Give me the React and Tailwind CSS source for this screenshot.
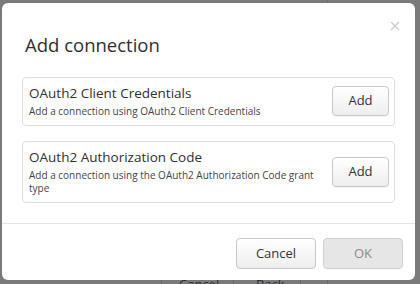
import React from 'react';

const FONT = { fontFamily: '"Open Sans", "Noto Sans", sans-serif' };

const OPTIONS = [
  {
    id: 'client-credentials',
    title: 'OAuth2 Client Credentials',
    desc: 'Add a connection using OAuth2 Client Credentials',
  },
  {
    id: 'auth-code',
    title: 'OAuth2 Authorization Code',
    desc: 'Add a connection using the OAuth2 Authorization Code grant type',
  },
];

function CloseIcon() {
  return (
    <svg width="10" height="10" viewBox="0 0 10 10" className="block">
      <path d="M1 1 L9 9 M9 1 L1 9" stroke="#c9c9c9" strokeWidth="1.2" fill="none" />
    </svg>
  );
}

// page behind the overlay; only its bottom edge peeks out under the dialog
function Backdrop() {
  return (
    <div className="absolute inset-0 bg-[#7a7a7a] flex flex-col justify-between">
      <div className="h-[6px] pl-[327px]">
        <div className="w-px h-full bg-[#6c6c6c]" />
      </div>
      <div className="h-[8px] flex pl-[161px] text-[13px] leading-[16px] text-[#2e2e2e]">
        <div className="w-[72px] border-l border-[#6a6a6a] pl-[17px] whitespace-nowrap">Cancel</div>
        <div className="w-[67px] border-l border-[#6a6a6a] pl-[22px] whitespace-nowrap">Back</div>
        <div className="w-[28px] border-l border-r border-[#6a6a6a]" />
      </div>
    </div>
  );
}

function OptionCard({ title, desc }) {
  return (
    <div className="flex items-center justify-between border border-[#dedede] rounded-[4px] pl-[6px] pr-[5px] pt-[6px] pb-[7px]">
      <div className="w-[290px]">
        <div className="text-[13.5px] leading-[19px] text-[#2f2f2f]">{title}</div>
        <div className="text-[10px] leading-[13px] text-[#444] mt-[2px]">{desc}</div>
      </div>
      <button className="w-[57px] h-[30px] rounded-[4px] border border-[#c8c8c8] bg-gradient-to-b from-[#ffffff] to-[#eeeeee] text-[13px] text-[#333] shadow-[0_1px_1px_rgba(0,0,0,0.05)]">
        Add
      </button>
    </div>
  );
}

export default function App() {
  return (
    <div className="relative w-[420px] h-[284px] overflow-hidden" style={FONT}>
      <Backdrop />
      <div className="relative ml-[2px] mt-[3px] w-[413px] h-[277px] bg-white rounded-[6px] flex flex-col">
        <button className="absolute top-[18px] right-[15px] p-0">
          <CloseIcon />
        </button>
        <h2 className="pl-[23px] pt-[29px] text-[18.5px] leading-[26px] text-[#2f2f2f]">Add connection</h2>
        <div className="px-[20px] mt-[19px] flex flex-col gap-[15px]">
          {OPTIONS.map(o => (
            <OptionCard key={o.id} title={o.title} desc={o.desc} />
          ))}
        </div>
        <div className="mt-auto border-t border-[#e3e3e3] flex justify-end gap-[7px] pt-[14px] pb-[11px] pr-[12px]">
          <button className="w-[80px] h-[31px] rounded-[4px] border border-[#c8c8c8] bg-gradient-to-b from-[#ffffff] to-[#eeeeee] text-[13px] text-[#333]">
            Cancel
          </button>
          <button disabled className="w-[80px] h-[31px] rounded-[4px] border border-[#cfcfcf] bg-[#e6e6e6] text-[13px] text-[#8a8a8a]">
            OK
          </button>
        </div>
      </div>
    </div>
  );
}
